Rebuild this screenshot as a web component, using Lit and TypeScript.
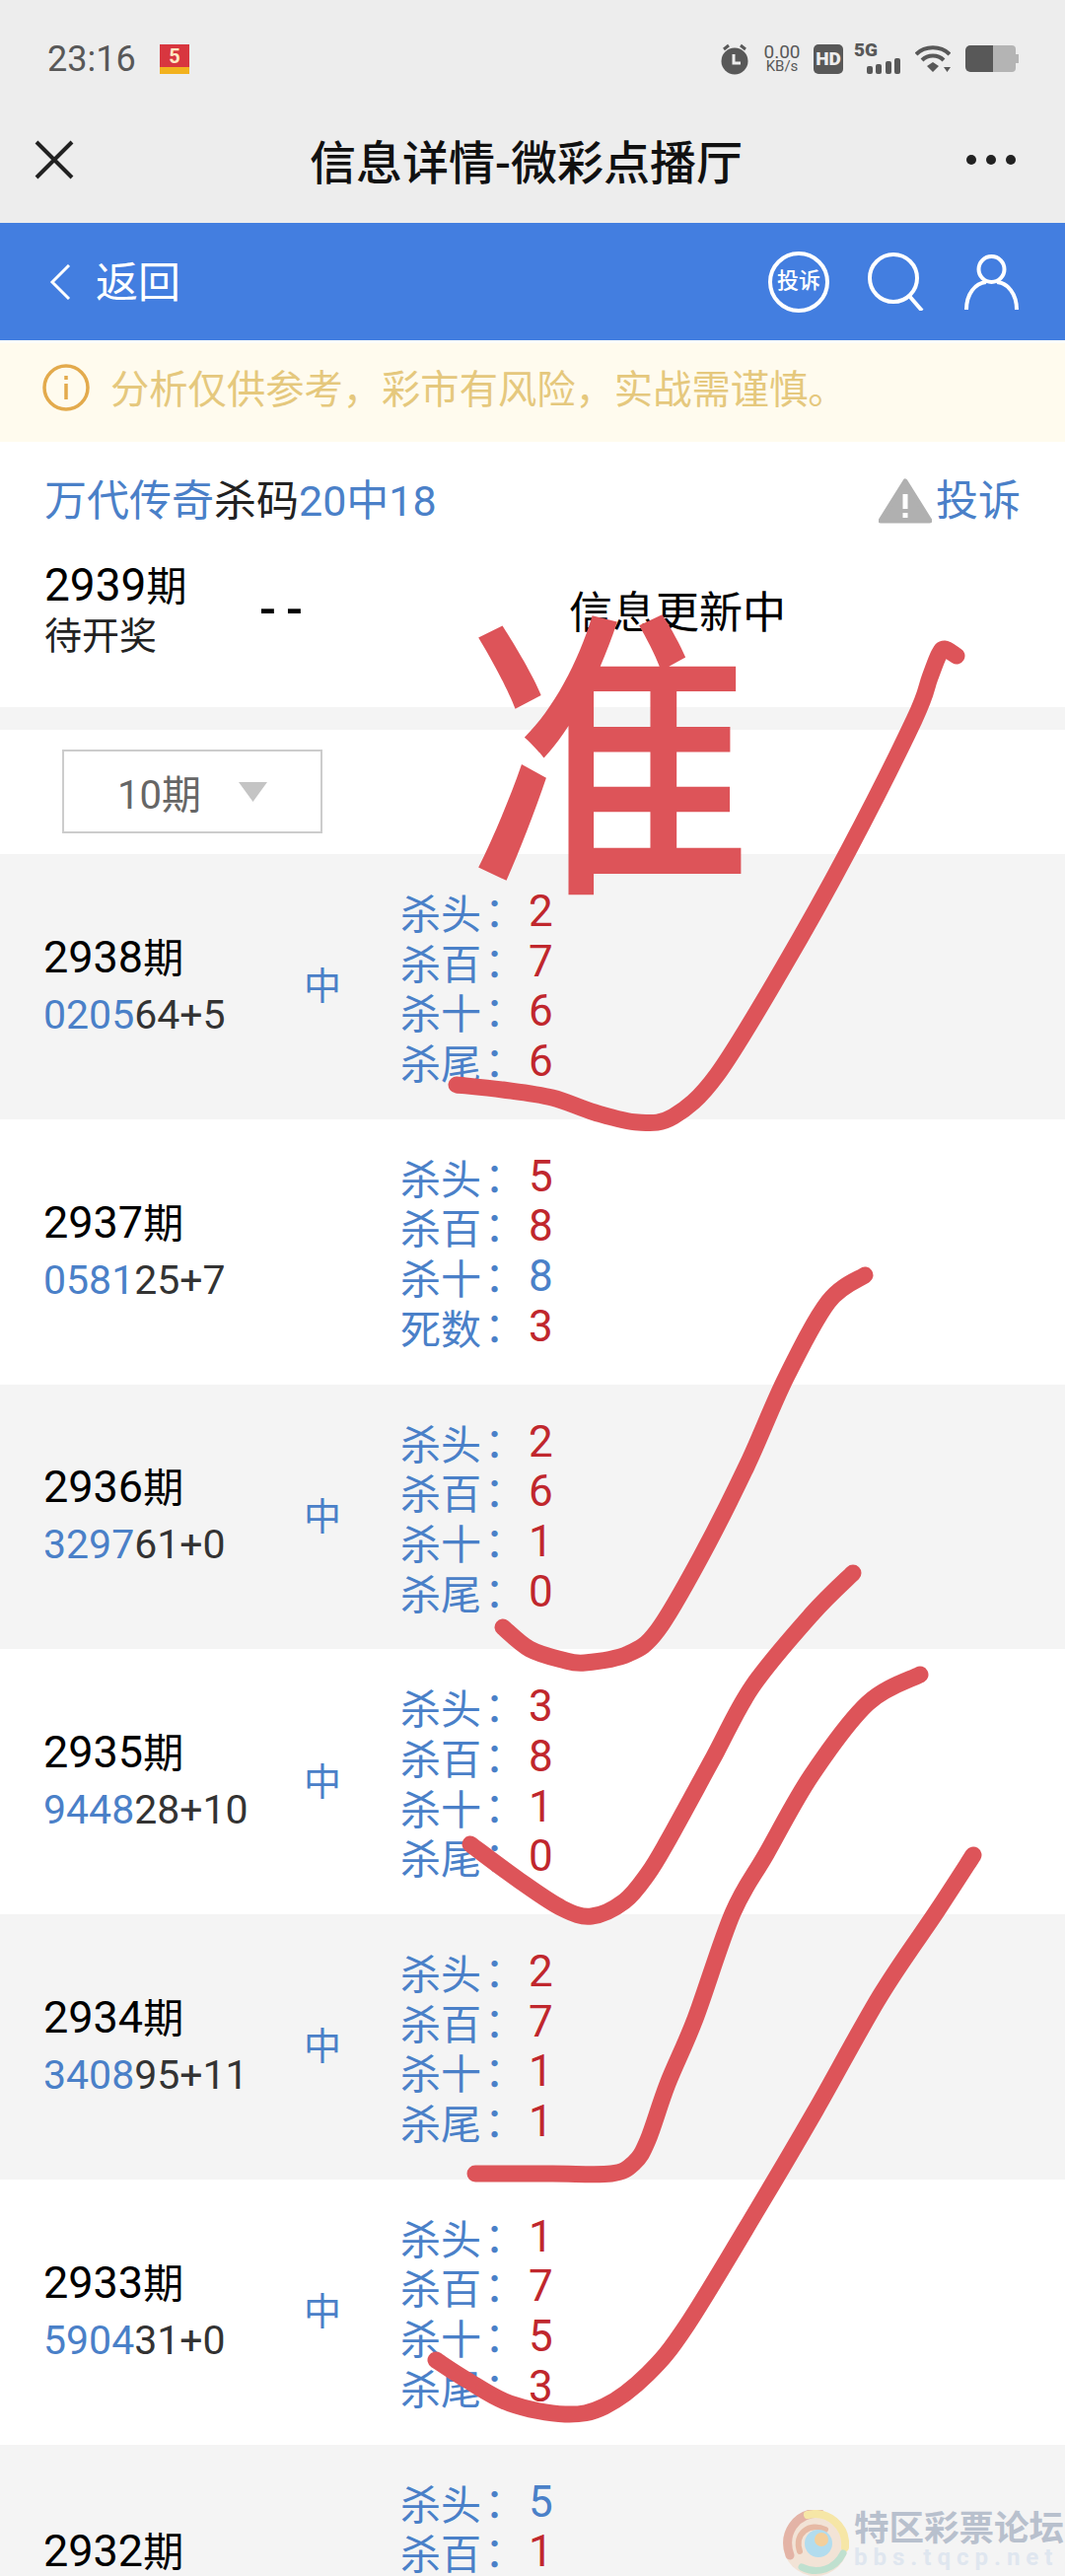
import { LitElement, html, css, svg, nothing } from 'lit';
import { customElement } from 'lit/decorators.js';

interface Kill {
  label: string;
  value: string;
  hit?: boolean;
}

interface Round {
  issue: string;
  head: string;
  tail: string;
  won: boolean;
  partial?: boolean;
  kills: Kill[];
}

const kills = (a: string, b: string, c: string, d: string, last = '杀尾', hit = -1): Kill[] =>
  [
    ['杀头', a],
    ['杀百', b],
    ['杀十', c],
    [last, d],
  ].map(([label, value], i) => ({ label, value, hit: i === hit }));

const ROUNDS: Round[] = [
  { issue: '2938', head: '0205', tail: '64+5', won: true, kills: kills('2', '7', '6', '6') },
  { issue: '2937', head: '0581', tail: '25+7', won: false, kills: kills('5', '8', '8', '3', '死数', 2) },
  { issue: '2936', head: '3297', tail: '61+0', won: true, kills: kills('2', '6', '1', '0') },
  { issue: '2935', head: '9448', tail: '28+10', won: true, kills: kills('3', '8', '1', '0') },
  { issue: '2934', head: '3408', tail: '95+11', won: true, kills: kills('2', '7', '1', '1') },
  { issue: '2933', head: '5904', tail: '31+0', won: true, kills: kills('1', '7', '5', '3') },
  // cut off by the bottom of the window
  {
    issue: '2932',
    head: '',
    tail: '',
    won: false,
    partial: true,
    kills: [
      { label: '杀头', value: '5', hit: true },
      { label: '杀百', value: '1' },
    ],
  },
];

/* Hand-drawn check marks, page coordinates */
const STROKES: number[][][] = [
  [[463, 1100], [510, 1105], [560, 1113], [603, 1128], [647, 1138], [683, 1132], [727, 1090], [793, 983], [860, 863], [927, 730], [943, 687], [952, 664], [958, 658], [970, 665]],
  [[510, 1650], [537, 1672], [570, 1683], [593, 1686], [637, 1677], [667, 1653], [710, 1580], [757, 1487], [797, 1397], [840, 1320], [877, 1293]],
  [[477, 1870], [527, 1907], [570, 1935], [600, 1943], [633, 1928], [657, 1900], [677, 1867], [723, 1783], [763, 1710], [823, 1637], [865, 1595]],
  [[482, 2204], [560, 2204], [620, 2204], [643, 2193], [657, 2170], [677, 2113], [705, 2047], [743, 1940], [777, 1880], [823, 1800], [880, 1727], [933, 1698]],
  [[442, 2393], [473, 2413], [517, 2437], [573, 2448], [613, 2440], [657, 2407], [697, 2357], [770, 2237], [827, 2140], [893, 2023], [950, 1938], [987, 1881]],
];

function smooth(pts: number[][]): string {
  let d = `M${pts[0][0]} ${pts[0][1]}`;
  for (let i = 0; i < pts.length - 1; i++) {
    const p0 = pts[Math.max(i - 1, 0)];
    const p1 = pts[i];
    const p2 = pts[i + 1];
    const p3 = pts[Math.min(i + 2, pts.length - 1)];
    const c1x = p1[0] + (p2[0] - p0[0]) / 6;
    const c1y = p1[1] + (p2[1] - p0[1]) / 6;
    const c2x = p2[0] - (p3[0] - p1[0]) / 6;
    const c2y = p2[1] - (p3[1] - p1[1]) / 6;
    d += ` C${c1x} ${c1y} ${c2x} ${c2y} ${p2[0]} ${p2[1]}`;
  }
  return d;
}

@customElement('app-root')
export class AppRoot extends LitElement {
  static styles = css`
    :host {
      display: block;
      position: relative;
      width: 1080px;
      height: 2612px;
      overflow: hidden;
      background: #fff;
      font-family: Roboto, 'Noto Sans CJK SC', sans-serif;
      color: #000;
    }

    svg {
      display: block;
      flex-shrink: 0;
    }

    .chrome {
      height: 226px;
      background: #ededed;
      display: flex;
      flex-direction: column;
    }

    .status {
      height: 113px;
      padding: 6px 48px 0;
      box-sizing: border-box;
      display: flex;
      align-items: center;
      color: #585858;
    }

    .time {
      font-size: 36px;
      width: 114px;
    }

    .app-badge {
      width: 30px;
      height: 30px;
      background: linear-gradient(#d8363f 0 76%, #f2b21e 76%);
      color: #ffe9c4;
      font-size: 20px;
      font-weight: 700;
      line-height: 24px;
      text-align: center;
    }

    .status-right {
      margin-left: auto;
      display: flex;
      align-items: center;
      margin-right: -1px;
    }

    .speed {
      width: 38px;
      margin: 0 13px 0 14px;
      text-align: center;
      font-size: 19px;
      line-height: 15px;
      white-space: nowrap;
    }

    .speed small {
      display: block;
      font-size: 15px;
    }

    .hd {
      width: 30px;
      height: 30px;
      border-radius: 5px;
      background: #585858;
      color: #ededed;
      font-size: 19px;
      font-weight: 900;
      line-height: 30px;
      text-align: center;
    }

    .signal {
      position: relative;
      width: 47px;
      height: 30px;
      margin: 0 15px 0 11px;
    }

    .five-g {
      position: absolute;
      left: 0;
      top: -4px;
      font-size: 19px;
      font-weight: 900;
      line-height: 20px;
    }

    .signal svg {
      position: absolute;
      right: 0;
      bottom: 0;
    }

    .battery {
      margin-left: 15px;
    }

    .titlebar {
      flex: 1;
      padding: 0 50px 16px 35px;
      display: flex;
      align-items: center;
      justify-content: space-between;
    }

    .titlebar h1 {
      margin: 0;
      font-size: 47px;
      font-weight: 500;
      color: #111;
      padding-left: 12px;
    }

    .bluebar {
      height: 119px;
      background: #437ee0;
      color: #fff;
      padding: 0 47px 0 50px;
      box-sizing: border-box;
      display: flex;
      align-items: center;
    }

    .back {
      font-size: 43px;
      margin-left: 25px;
      padding-bottom: 5px;
      flex: 1;
    }

    .complain-round {
      width: 62px;
      height: 62px;
      border: 4px solid #fff;
      border-radius: 50%;
      box-sizing: border-box;
      font-size: 22px;
      font-weight: 500;
      line-height: 52px;
      text-align: center;
      margin-right: 39px;
      white-space: nowrap;
    }

    .user {
      margin-left: 41px;
    }

    .notice {
      height: 103px;
      box-sizing: border-box;
      border-top: 3px solid #fdfefa;
      background: #fffbee;
      padding: 0 0 11px 43px;
      display: flex;
      align-items: center;
      gap: 21px;
      font-size: 39.300px;
      color: #e5c87d;
    }

    .notice span {
      margin-bottom: 3px;
    }

    .headline {
      height: 269px;
      padding: 30px 45px 0 45px;
      box-sizing: border-box;
    }

    .headline-top {
      display: flex;
      align-items: center;
      justify-content: space-between;
      font-size: 43px;
      line-height: 60px;
      color: #222;
    }

    .blue {
      color: #4a80c8;
    }

    .complain {
      display: flex;
      align-items: center;
      gap: 4px;
      color: #4a80c8;
    }

    .current {
      display: grid;
      grid-template-columns: 218px 314px 1fr;
      align-items: center;
      margin-top: 29px;
    }

    .current-issue {
      font-size: 46px;
      line-height: 52px;
    }

    .current-issue em,
    .issue em {
      font-style: normal;
      font-size: 41px;
    }

    .current-state {
      font-size: 38px;
      line-height: 48px;
      color: #222;
    }

    .dash {
      font-size: 50px;
      font-weight: 500;
      letter-spacing: 10px;
      line-height: 50px;
    }

    .updating {
      font-size: 44px;
    }

    .gap {
      height: 23px;
      background: #f4f4f4;
    }

    .filter {
      height: 126px;
      padding: 20px 0 0 63px;
      box-sizing: border-box;
    }

    .select {
      width: 264px;
      height: 85px;
      box-sizing: border-box;
      border: 2px solid #ccc;
      display: flex;
      align-items: center;
      gap: 38px;
      padding-left: 54px;
      font-size: 40px;
      color: #666;
    }

    .row {
      height: 268.750px;
      box-sizing: border-box;
      padding-left: 44px;
      display: grid;
      grid-template-columns: 264px 98px 1fr;
      align-items: center;
    }

    .row:nth-child(odd) {
      background: #f4f4f4;
    }

    .row.partial {
      height: 134px;
      align-items: start;
      padding-top: 33px;
    }

    .row.partial .issue {
      padding-top: 47px;
    }

    .issue {
      font-size: 45px;
      line-height: 56px;
    }

    .draw {
      font-size: 41px;
      line-height: 58px;
      color: #333;
    }

    .won {
      font-size: 38px;
      color: #4a80c8;
      line-height: 56px;
    }

    .kill {
      display: flex;
      height: 50.700px;
      font-size: 41px;
      line-height: 50.700px;
      color: #4a80c8;
    }

    .kill b {
      width: 130px;
      font-weight: 400;
    }

    .colon {
      font-family: 'Noto Sans CJK TC', sans-serif;
      margin-left: -7px;
    }

    .kill span.value {
      font-size: 44px;
      color: #c0272d;
    }

    .kill span.value.hit {
      color: #4a80c8;
    }

    /* Pen marks drawn over the finished page */
    .pen {
      position: absolute;
      inset: 0;
      pointer-events: none;
    }

    .pen-char {
      position: absolute;
      left: 473px;
      top: 541px;
      font-family: 'Noto Sans CJK SC', sans-serif;
      font-size: 290px;
      line-height: 400px;
      font-weight: 500;
      color: #dd5459;
      transform: scaleY(1.060);
      transform-origin: 50% 91px;
    }

    .mark {
      position: absolute;
      left: 793px;
      top: 2545px;
      width: 290px;
      display: flex;
      gap: 5px;
    }

    .mark-text {
      font-size: 35.500px;
      font-weight: 700;
      line-height: 38px;
      color: #b8c0cd;
      white-space: nowrap;
    }

    .mark-url {
      font-size: 24px;
      font-weight: 700;
      line-height: 20px;
      letter-spacing: 6px;
      color: #dfe6ef;
      white-space: nowrap;
    }
  `;

  private renderStatus() {
    return html`
      <div class="status">
        <span class="time">23:16</span>
        <div class="app-badge">5</div>
        <div class="status-right">
          <svg width="30" height="32" viewBox="0 0 30 32">
            <circle cx="15" cy="18" r="13.500" fill="#585858" />
            <path d="M4 6l5-4M26 6l-5-4" stroke="#585858" stroke-width="3" />
            <path d="M14 11v9h7" fill="none" stroke="#ededed" stroke-width="3" />
          </svg>
          <div class="speed">0.00<small>KB/s</small></div>
          <div class="hd">HD</div>
          <div class="signal">
            <span class="five-g">5G</span>
            <svg width="34" height="16" viewBox="0 0 34 16" fill="#585858">
              <rect x="0" y="8" width="6" height="8" rx="2" />
              <rect x="9" y="6" width="6" height="10" rx="2" />
              <rect x="19" y="3" width="6" height="13" rx="2" />
              <rect x="28" y="0" width="6" height="16" rx="2" />
            </svg>
          </div>
          <svg width="36" height="27" viewBox="0 0 36 27">
            <g fill="none" stroke="#585858" stroke-width="4">
              <path d="M1 9C10 0 26 0 35 9" />
              <path d="M7 15C13 9 23 9 29 15" />
            </g>
            <path d="M12 21l6-4 6 4-6 6zM29 22h7l-3.500 5z" fill="#585858" />
          </svg>
          <svg class="battery" width="54" height="27" viewBox="0 0 54 27">
            <path d="M28 0h19a4 4 0 0 1 4 4v19a4 4 0 0 1-4 4H28z" fill="#b4b4b4" />
            <path d="M5 0h23v27H5a5 5 0 0 1-5-5V5a5 5 0 0 1 5-5z" fill="#585858" />
            <rect x="51" y="9" width="3" height="9" fill="#b4b4b4" />
          </svg>
        </div>
      </div>
    `;
  }

  private renderRow(round: Round) {
    return html`
      <div class="row ${round.partial ? 'partial' : ''}">
        <div>
          <div class="issue">${round.issue}<em>期</em></div>
          ${round.partial
            ? nothing
            : html`<div class="draw"><span class="blue">${round.head}</span>${round.tail}</div>`}
        </div>
        <div class="won">${round.won ? '中' : nothing}</div>
        <div>
          ${round.kills.map(
            (k) => html`
              <div class="kill">
                <b>${k.label}<span class="colon">：</span></b>
                <span class="value ${k.hit ? 'hit' : ''}">${k.value}</span>
              </div>
            `,
          )}
        </div>
      </div>
    `;
  }

  render() {
    return html`
      <div class="chrome">
        ${this.renderStatus()}
        <div class="titlebar">
          <svg width="40" height="40" viewBox="0 0 40 40">
            <path d="M2 2l36 36M38 2L2 38" stroke="#222" stroke-width="4" />
          </svg>
          <h1>信息详情-微彩点播厅</h1>
          <svg width="50" height="12" viewBox="0 0 50 12" fill="#222">
            <circle cx="5" cy="6" r="5" />
            <circle cx="25" cy="6" r="5" />
            <circle cx="45" cy="6" r="5" />
          </svg>
        </div>
      </div>

      <div class="bluebar">
        <svg width="22" height="36" viewBox="0 0 22 36">
          <path d="M20 1L3 18l17 17" fill="none" stroke="#fff" stroke-width="3" />
        </svg>
        <div class="back">返回</div>
        <div class="complain-round">投诉</div>
        <svg width="57" height="59" viewBox="0 0 57 59" fill="none" stroke="#fff" stroke-width="4">
          <circle cx="26" cy="26" r="24" />
          <path d="M42 44l13 15" />
        </svg>
        <svg class="user" width="55" height="56" viewBox="0 0 55 56" fill="none" stroke="#fff" stroke-width="4">
          <circle cx="27.500" cy="15" r="13" />
          <path d="M2 56C2 40 11 29 22 28M53 56C53 40 44 29 33 28" />
        </svg>
      </div>

      <div class="notice">
        <svg width="48" height="48" viewBox="0 0 48 48" fill="none" stroke="#e3aa4c" stroke-width="3.500">
          <circle cx="24" cy="24" r="22" />
          <path d="M24 20v16M24 12v4" />
        </svg>
        <span>分析仅供参考，彩市有风险，实战需谨慎。</span>
      </div>

      <div class="headline">
        <div class="headline-top">
          <div><span class="blue">万代传奇</span>杀码<span class="blue">20中18</span></div>
          <div class="complain">
            <svg width="54" height="46" viewBox="0 0 54 46">
              <path d="M27 3L52 43H2z" fill="#b0b0b0" stroke="#b0b0b0" stroke-width="5" stroke-linejoin="round" />
              <path d="M27 16v15M27 35v5" stroke="#fff" stroke-width="5" />
            </svg>
            <span>投诉</span>
          </div>
        </div>
        <div class="current">
          <div>
            <div class="current-issue">2939<em>期</em></div>
            <div class="current-state">待开奖</div>
          </div>
          <div class="dash">--</div>
          <div class="updating">信息更新中</div>
        </div>
      </div>

      <div class="gap"></div>

      <div class="filter">
        <div class="select">
          <span>10期</span>
          <svg width="29" height="20" viewBox="0 0 29 20"><path d="M0 0h29L14.500 20z" fill="#c4c4c4" /></svg>
        </div>
      </div>

      <div>${ROUNDS.map((r) => this.renderRow(r))}</div>

      <div class="mark">
        <svg width="68" height="67" viewBox="0 0 68 67" fill="none" stroke-linecap="round">
          <circle cx="34" cy="34" r="33" fill="#f2e3d6" />
          <path d="M8 46C0 24 14 3 38 3" stroke="#e3b3a6" stroke-width="9" />
          <path d="M26 5C46 0 66 16 64 38" stroke="#f6e6a6" stroke-width="8" />
          <path d="M62 44C54 60 36 66 20 58" stroke="#bfe0cf" stroke-width="7" />
          <path d="M18 42C12 24 28 12 44 20" stroke="#e6b9a4" stroke-width="6" />
          <circle cx="37" cy="34" r="14" fill="#b2dcee" />
          <circle cx="40" cy="30" r="7" fill="#f3cf9b" />
        </svg>
        <div>
          <div class="mark-text">特区彩票论坛</div>
          <div class="mark-url">bbs.tqcp.net</div>
        </div>
      </div>

      <div class="pen-char">准</div>
      <svg class="pen" width="1080" height="2612" viewBox="0 0 1080 2612" fill="none" stroke="#dd5459" stroke-width="17" stroke-linecap="round" stroke-linejoin="round">
        ${STROKES.map((s) => svg`<path d=${smooth(s)} />`)}
      </svg>
    `;
  }
}
